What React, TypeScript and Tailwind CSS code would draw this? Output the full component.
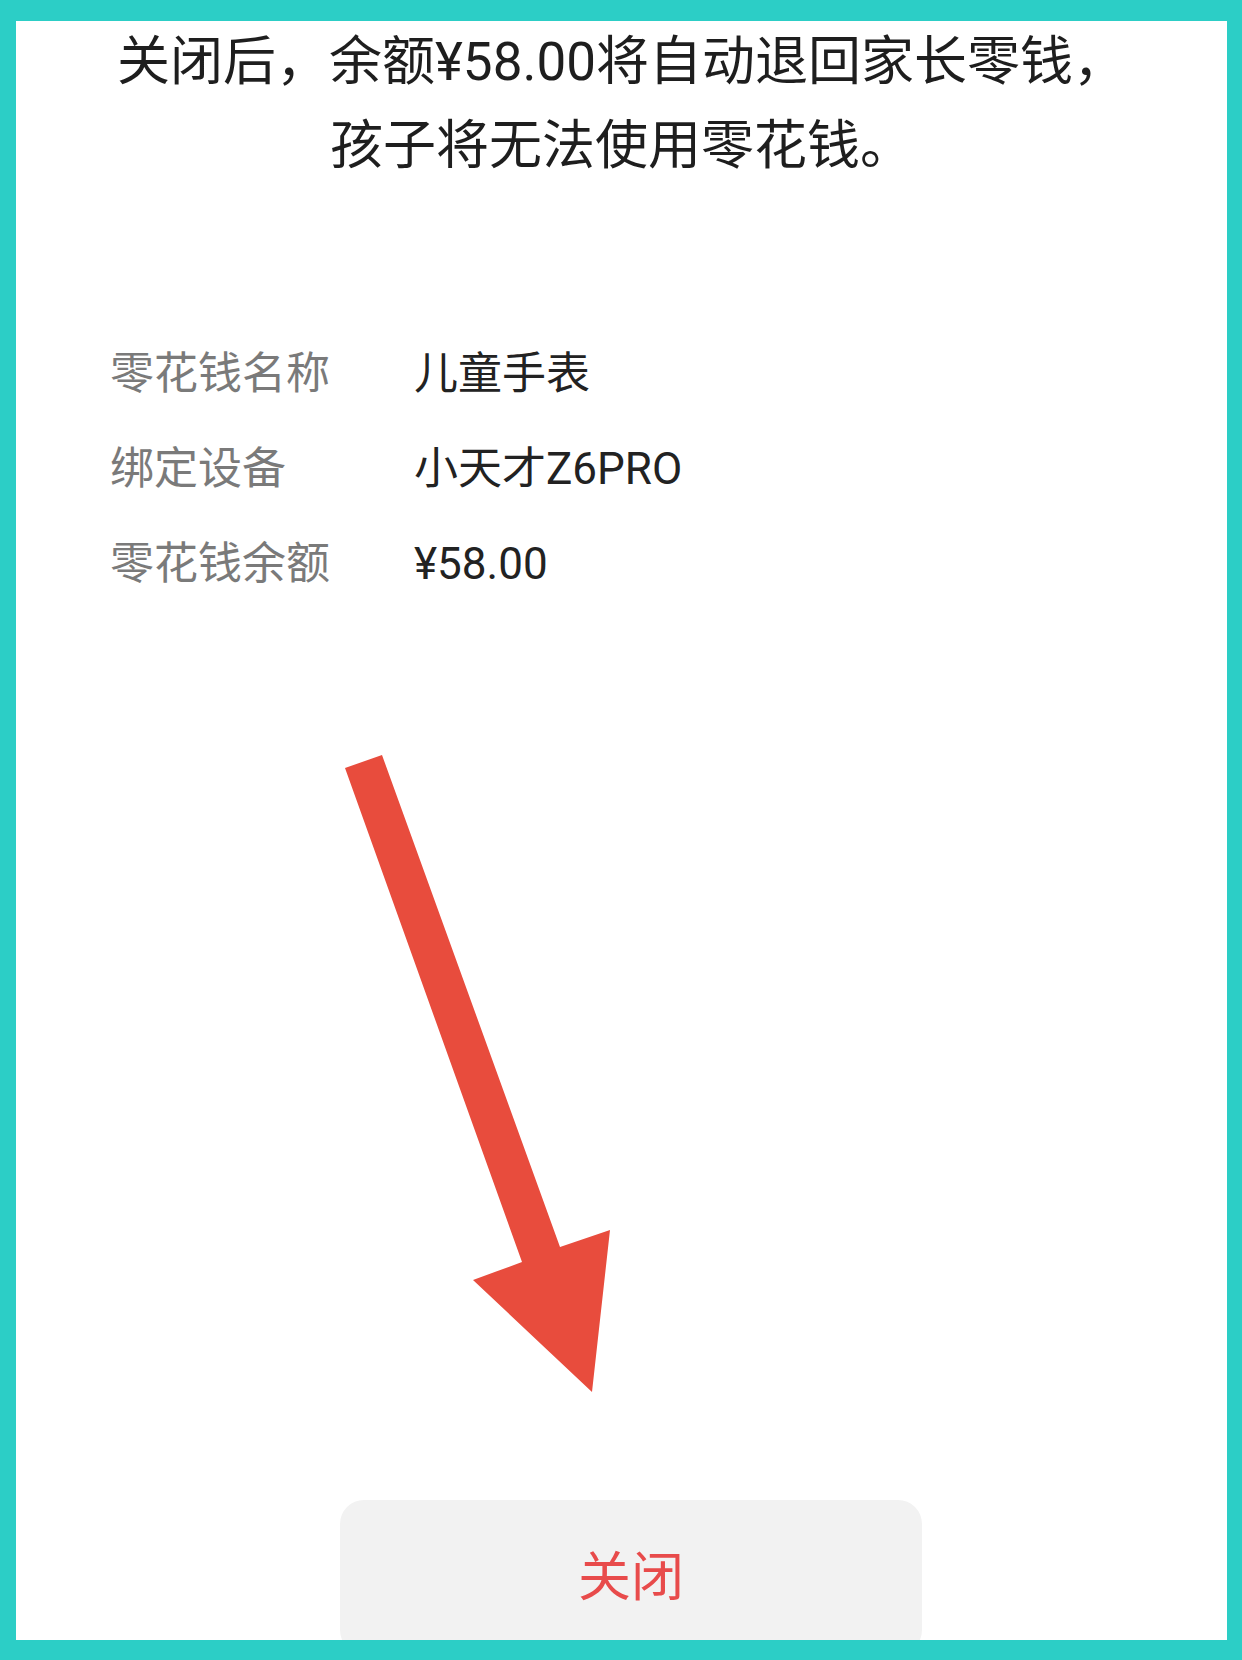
import React from "react";

const CJK = "Roboto, 'Noto Sans CJK SC', sans-serif";

const rows: { label: string; value: string }[] = [
  { label: "零花钱名称", value: "儿童手表" },
  { label: "绑定设备", value: "小天才Z6PRO" },
  { label: "零花钱余额", value: "¥58.00" },
];

function PointerArrow() {
  return (
    <svg
      className="absolute left-0 top-0 pointer-events-none"
      width="1211"
      height="1619"
      viewBox="0 0 1211 1619"
    >
      <polygon
        points="329,747 366,734 544,1226 594,1209 576,1371 457,1259 506,1241"
        fill="#e84c3d"
      />
    </svg>
  );
}

export default function App() {
  return (
    <div
      className="w-[1242px] h-[1660px] bg-[#2ccec6] pt-[21px] pl-[16px] pr-[15px] pb-[20px]"
      style={{ fontFamily: CJK }}
    >
      <div className="relative h-full bg-white overflow-hidden flex flex-col">
        <div className="text-center text-[53px] leading-[84px] text-[#1e1e1e] -mt-[1px]">
          <p>关闭后，余额¥58.00将自动退回家长零钱，</p>
          <p>孩子将无法使用零花钱。</p>
        </div>

        <div className="mt-[138px] pl-[94px] flex flex-col">
          {rows.map((r) => (
            <div key={r.label} className="flex items-center h-[95px] text-[44px]">
              <span className="w-[304px] text-[#7a7a7a]">{r.label}</span>
              <span className="text-[#222222]">{r.value}</span>
            </div>
          ))}
        </div>

        <div className="mt-auto ml-[324px] mb-[-14px] w-[582px] h-[154px] rounded-[24px] bg-[#f2f2f2] flex justify-center pt-[45px]">
          <span className="text-[53px] leading-[66px] text-[#e84b4b]">关闭</span>
        </div>

        <PointerArrow />
      </div>
    </div>
  );
}
